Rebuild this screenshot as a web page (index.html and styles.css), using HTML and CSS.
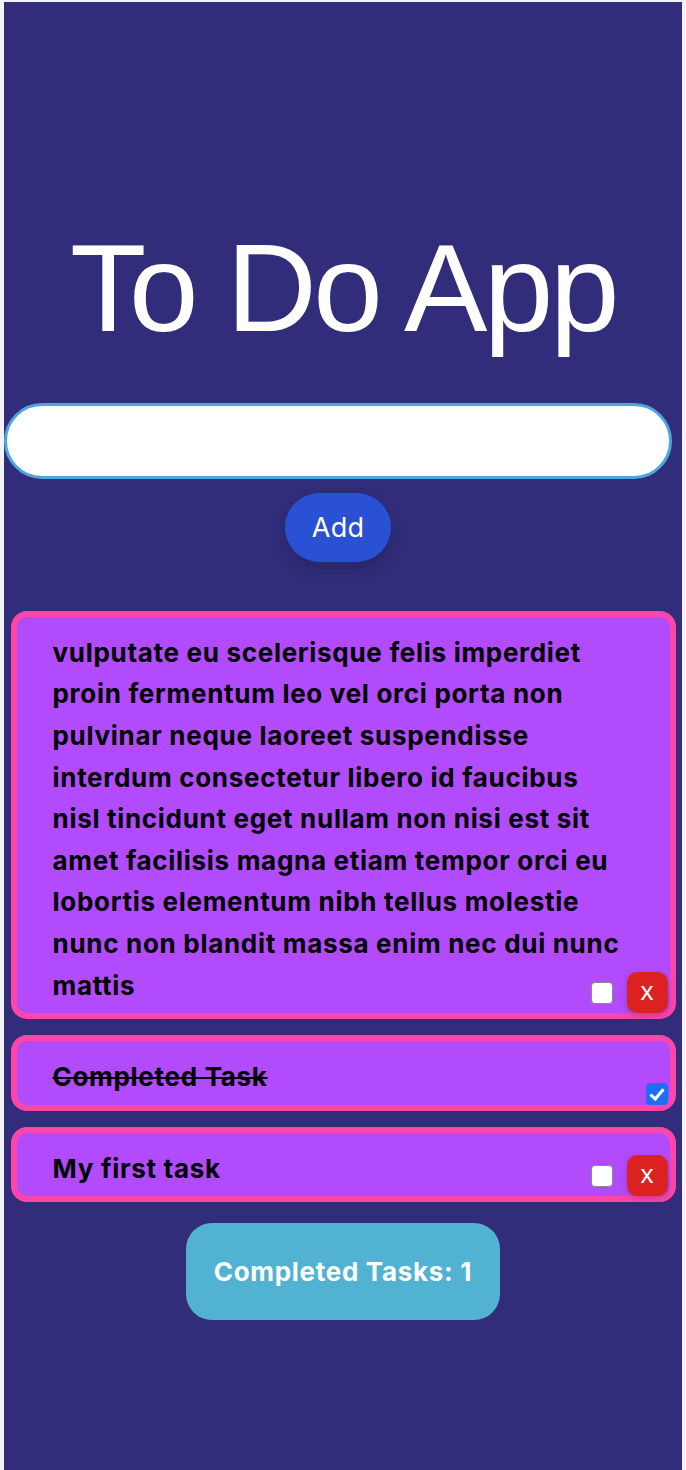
FILE: index.html
```html
<!DOCTYPE html>
<html lang="en">
<head>
<meta charset="utf-8">
<title>To Do App</title>
<link rel="stylesheet" href="styles.css">
</head>
<body>
<div class="app">
  <h1 class="title">To Do App</h1>
  <form class="add-form">
    <input class="task-input" type="text" aria-label="New task">
    <button class="add-btn" type="button">Add</button>
  </form>
  <ul class="task-list">
    <li class="task">
      <p class="task-text">vulputate eu scelerisque felis imperdiet proin fermentum leo vel orci porta non pulvinar neque laoreet suspendisse interdum consectetur libero id faucibus nisl tincidunt eget nullam non nisi est sit amet facilisis magna etiam tempor orci eu lobortis elementum nibh tellus molestie nunc non blandit massa enim nec dui nunc mattis</p>
      <div class="task-controls">
        <span class="check"></span>
        <button class="delete-btn" type="button">x</button>
      </div>
    </li>
    <li class="task">
      <p class="task-text done">Completed Task</p>
      <div class="task-controls">
        <span class="check checked"></span>
      </div>
    </li>
    <li class="task">
      <p class="task-text">My first task</p>
      <div class="task-controls">
        <span class="check"></span>
        <button class="delete-btn" type="button">x</button>
      </div>
    </li>
  </ul>
  <div class="counter">Completed Tasks: 1</div>
</div>
</body>
</html>
```

FILE: styles.css
```css
html, body {
  margin: 0;
  padding: 0;
  background: #f4f4f6;
}

.app {
  margin: 2px 4px 0 4px;
  min-height: 1468px;
  background: #312d7a;
  padding-top: 214px;
  box-sizing: border-box;
  display: flex;
  flex-direction: column;
  font-family: Inter, "Liberation Sans", sans-serif;
}

.title {
  margin: 0;
  text-align: center;
  font-family: "Liberation Sans", Arial, sans-serif;
  font-weight: 400;
  font-size: 125px;
  line-height: 1.15;
  letter-spacing: -3.4px;
  color: #ffffff;
}

.add-form {
  margin: 43px 0 0 0;
  width: 668px;
  display: flex;
  flex-direction: column;
  align-items: center;
}

.task-input {
  width: 100%;
  height: 76px;
  box-sizing: border-box;
  border: 3px solid #4ea6e0;
  border-radius: 38px;
  background: #ffffff;
  outline: none;
  padding: 0 24px;
  font-size: 24px;
}

.add-btn {
  margin-top: 14px;
  width: 106px;
  height: 69px;
  border: none;
  border-radius: 35px;
  background: #2a51d3;
  color: #ffffff;
  font-family: Inter, "Liberation Sans", sans-serif;
  font-size: 27px;
  font-weight: 400;
  letter-spacing: 0.3px;
  box-shadow: 0 8px 14px rgba(20, 20, 60, 0.25);
  padding: 0;
}

.task-list {
  list-style: none;
  margin: 49px auto 0 auto;
  padding: 0;
  width: 665px;
  display: flex;
  flex-direction: column;
  gap: 16px;
}

.task {
  position: relative;
  border: 6px solid #fe45aa;
  border-radius: 16px;
  background: #b14bfb;
  padding: 15px 44px 7px 36px;
}

.task-text {
  margin: 0;
  font-family: Inter, "Liberation Sans", sans-serif;
  font-weight: 700;
  font-size: 26px;
  letter-spacing: 0.7px;
  line-height: 1.6;
  color: #000000;
}

.task-text.done {
  text-decoration: line-through;
  text-decoration-thickness: 2px;
}

.task-controls {
  position: absolute;
  right: 2px;
  bottom: 0;
  display: flex;
  align-items: center;
  gap: 14px;
}

.check {
  display: block;
  width: 22px;
  height: 22px;
  box-sizing: border-box;
  border: 1.5px solid #8a8a8a;
  border-radius: 4px;
  background: #ffffff;
  position: relative;
}

.check.checked {
  background: #1b6ff3;
  border-color: #1b6ff3;
}

.check.checked::after {
  content: "";
  position: absolute;
  left: 6.5px;
  top: 2px;
  width: 5px;
  height: 11px;
  border-right: 3px solid #ffffff;
  border-bottom: 3px solid #ffffff;
  transform: rotate(40deg);
}

.delete-btn {
  width: 41px;
  height: 41px;
  border: none;
  border-radius: 10px;
  background: #dc2121;
  color: #ffffff;
  font-family: "Liberation Sans", Arial, sans-serif;
  font-size: 26px;
  line-height: 1;
  padding: 0 0 3px 0;
  box-shadow: 0 3px 6px rgba(40, 0, 40, 0.2);
}

.counter {
  align-self: center;
  margin-top: 21px;
  height: 97px;
  padding: 0 28px;
  box-sizing: border-box;
  display: flex;
  align-items: center;
  border-radius: 26px;
  background: #52b2d2;
  color: #ffffff;
  font-family: Inter, "Liberation Sans", sans-serif;
  font-weight: 700;
  font-size: 26px;
  letter-spacing: 0.7px;
}
```
